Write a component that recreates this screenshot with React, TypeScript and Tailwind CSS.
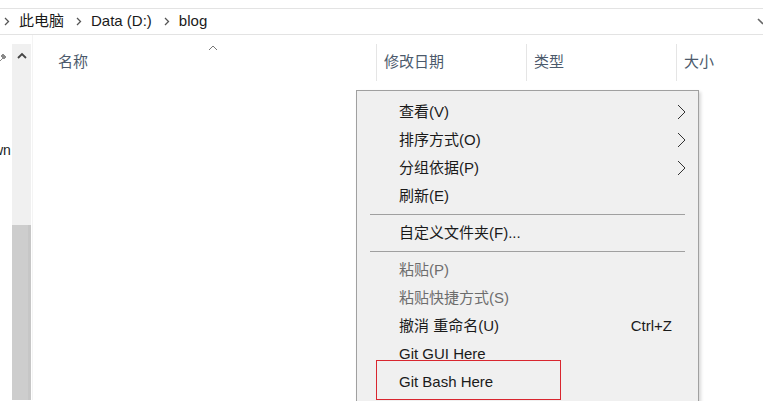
import React from "react";

const font = { fontFamily: '"Liberation Sans", "Noto Sans CJK SC", sans-serif' };

function Chevron() {
  return (
    <svg width="9" height="16" viewBox="0 0 9 16" className="text-[#333]">
      <path d="M1 1 L8 8 L1 15" fill="none" stroke="currentColor" strokeWidth="1" />
    </svg>
  );
}

function Crumb() {
  return (
    <svg width="6" height="9" viewBox="0 0 6 9" className="text-[#555]">
      <path d="M1 1 L4.5 4.5 L1 8" fill="none" stroke="currentColor" strokeWidth="1.3" />
    </svg>
  );
}

type Item = { label: string; arrow?: boolean; disabled?: boolean; shortcut?: string; boxed?: boolean };

function MenuRow({ item }: { item: Item }) {
  return (
    <div className="relative flex items-center h-[28px] pl-[42px] pr-[12px]">
      {item.boxed && (
        <div className="absolute left-[19px] top-[-8px] w-[185px] h-[40px] border border-[#d9262f]" />
      )}
      <span className={item.disabled ? "flex-1 text-[#6d6d6d]" : "flex-1 text-[#1a1a1a]"}>{item.label}</span>
      {item.shortcut && <span className="mr-[14px] text-[#1a1a1a]">{item.shortcut}</span>}
      {item.arrow && <Chevron />}
    </div>
  );
}

function Sep() {
  return <div className="mx-[13px] my-[4px] h-px bg-[#a0a0a0]" />;
}

export default function App() {
  const top: Item[] = [
    { label: "查看(V)", arrow: true },
    { label: "排序方式(O)", arrow: true },
    { label: "分组依据(P)", arrow: true },
    { label: "刷新(E)" },
  ];
  const bottom: Item[] = [
    { label: "粘贴(P)", disabled: true },
    { label: "粘贴快捷方式(S)", disabled: true },
    { label: "撤消 重命名(U)", shortcut: "Ctrl+Z" },
    { label: "Git GUI Here" },
    { label: "Git Bash Here", boxed: true },
  ];

  return (
    <div className="relative w-[763px] h-[401px] overflow-hidden bg-white text-[15px]" style={font}>
      {/* top strip */}
      <div className="h-[9px] border-b border-[#e3e3e3]" />

      {/* address bar */}
      <div className="flex items-center h-[26px] border-b border-[#e3e3e3] text-[#1a1a1a]">
        <div className="flex items-center gap-[9px] pl-[4px]">
          <Crumb />
          <span>此电脑</span>
        </div>
        <div className="flex items-center gap-[9px] pl-[12px]">
          <Crumb />
          <span>Data (D:)</span>
        </div>
        <div className="flex items-center gap-[9px] pl-[12px]">
          <Crumb />
          <span>blog</span>
        </div>
        <div className="ml-auto mr-[-2px] text-[#666]">
          <svg width="8" height="8" viewBox="0 0 8 8">
            <path d="M1 1 L6 6" stroke="currentColor" strokeWidth="1.6" />
          </svg>
        </div>
      </div>

      {/* body */}
      <div className="flex h-[365px]">
        {/* nav pane */}
        <div className="flex w-[33px] border-r border-[#f4f4f4]">
          <div className="w-[12px] flex flex-col">
            <svg width="7" height="8" viewBox="0 0 7 8" className="mt-[19px] ml-[-1px] text-[#8a8a8a]">
              <path d="M0 8 L4 4 M2 2 L5 5 L7 3 L4 0 Z" stroke="currentColor" fill="currentColor" strokeWidth="1" />
            </svg>
            <span className="mt-[78px] ml-[-7px] text-[14px] text-[#222]">wn</span>
          </div>
          <div className="mt-[9px] w-[19px] flex flex-col">
            <div className="h-[181px] bg-[#f0f0f0] flex justify-center pt-[8px]">
              <svg width="10" height="7" viewBox="0 0 10 7" className="text-[#444]">
                <path d="M1 6 L5 2 L9 6" fill="none" stroke="currentColor" strokeWidth="1.8" />
              </svg>
            </div>
            <div className="flex-1 bg-[#cdcdcd] border-r-[3px] border-[#c6c6c6]" />
          </div>
        </div>

        {/* main */}
        <div className="relative flex-1">
          <div className="flex h-[37px] mt-[9px] text-[#4c5a6c]">
            <div className="relative w-[343px] flex items-center pl-[25px]">
              <span>名称</span>
              <svg width="10" height="6" viewBox="0 0 10 6" className="absolute left-[175px] top-[1px] text-[#777]">
                <path d="M1 5 L5 1 L9 5" fill="none" stroke="currentColor" strokeWidth="1" />
              </svg>
            </div>
            <div className="w-[150px] flex items-center pl-[7px] border-l border-[#e5e5e5]">
              <span>修改日期</span>
            </div>
            <div className="w-[150px] flex items-center pl-[7px] border-l border-[#e5e5e5]">
              <span>类型</span>
            </div>
            <div className="flex-1 flex items-center pl-[7px] border-l border-[#e5e5e5]">
              <span>大小</span>
            </div>
          </div>

          {/* context menu */}
          <div className="absolute left-[323px] top-[55px] w-[343px] h-[330px] bg-[#f0f0f0] border border-[#a0a0a0] pt-[7px] shadow-[2px_2px_3px_rgba(0,0,0,0.15)]">
            {top.map((it) => (
              <MenuRow key={it.label} item={it} />
            ))}
            <Sep />
            <MenuRow item={{ label: "自定义文件夹(F)..." }} />
            <Sep />
            {bottom.map((it) => (
              <MenuRow key={it.label} item={it} />
            ))}
          </div>
        </div>
      </div>
    </div>
  );
}
